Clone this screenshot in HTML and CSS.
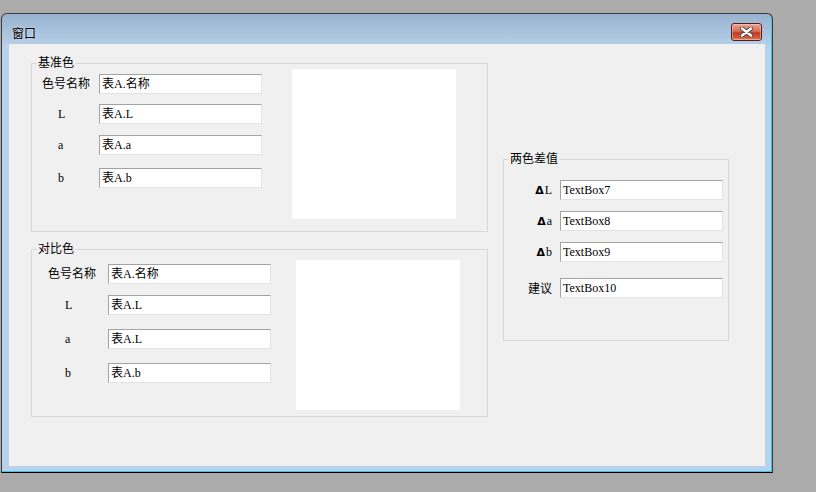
FILE: index.html
```html
<!DOCTYPE html>
<html>
<head>
    <title>窗口</title>
    <meta charset="UTF-8">
    <link rel="stylesheet" href="styles.css">
</head>

<body>
    <div class="window">
        <div class="titlebar">
            <span class="title">窗口</span>
            <div class="close-btn">
                <svg width="13" height="10" viewBox="0 0 13 10">
                    <path d="M2 1.5 L11 8.5 M11 1.5 L2 8.5" stroke="#4a4a4a" stroke-width="4.4" stroke-linecap="round"/>
                    <path d="M2 1.5 L11 8.5 M11 1.5 L2 8.5" stroke="#ffffff" stroke-width="2.4" stroke-linecap="round"/>
                </svg>
            </div>
        </div>

        <div class="client">
            <div class="left-col">
                <div class="group group-base">
                    <span class="group-title">基准色</span>
                    <div class="fields">
                        <span class="label">色号名称</span>
                        <div class="textbox">表A.名称</div>
                        <span class="label short">L</span>
                        <div class="textbox">表A.L</div>
                        <span class="label short">a</span>
                        <div class="textbox">表A.a</div>
                        <span class="label short">b</span>
                        <div class="textbox">表A.b</div>
                    </div>
                    <div class="swatch"></div>
                </div>

                <div class="group group-compare">
                    <span class="group-title">对比色</span>
                    <div class="fields">
                        <span class="label">色号名称</span>
                        <div class="textbox">表A.名称</div>
                        <span class="label short">L</span>
                        <div class="textbox">表A.L</div>
                        <span class="label short">a</span>
                        <div class="textbox">表A.L</div>
                        <span class="label short">b</span>
                        <div class="textbox">表A.b</div>
                    </div>
                    <div class="swatch"></div>
                </div>
            </div>

            <div class="group group-diff">
                <span class="group-title">两色差值</span>
                <div class="fields">
                    <span class="label"><b class="delta">Δ</b>L</span>
                    <div class="textbox">TextBox7</div>
                    <span class="label"><b class="delta">Δ</b>a</span>
                    <div class="textbox">TextBox8</div>
                    <span class="label"><b class="delta">Δ</b>b</span>
                    <div class="textbox">TextBox9</div>
                    <span class="label cjk">建议</span>
                    <div class="textbox">TextBox10</div>
                </div>
            </div>
        </div>
    </div>
</body>
</html>
```

FILE: styles.css
```css
:root {
    --desktop: #ababab;
    --frame: #b9d1ea;
    --face: #f0f0f0;
    --group-border: #d8d8d8;
}

body {
    margin: 0;
    padding: 13px 0 0 1px;
    background: var(--desktop);
    font-family: "Liberation Serif", "Noto Sans CJK SC", serif;
    font-size: 12px;
    color: #000;
    height: 492px;
    box-sizing: border-box;
    overflow: hidden;
}

.window {
    width: 772px;
    height: 460px;
    box-sizing: border-box;
    border: 1px solid #3a3a3a;
    border-bottom-color: #000;
    border-radius: 6px 6px 0 0;
    background: linear-gradient(#98b3cf, var(--frame) 34px);
    box-shadow: inset -1px -1px 0 #3cc6ea;
    padding: 0 7px 6px 7px;
}

.titlebar {
    height: 30px;
    display: flex;
    justify-content: space-between;
    align-items: flex-start;
    padding: 0 3px;
}

.title {
    margin-top: 11px;
    line-height: 16px;
    font-family: "Noto Sans CJK SC", sans-serif;
    text-shadow: 0 0 3px rgba(255,255,255,0.7);
}

.close-btn {
    margin-top: 9px;
    width: 31px;
    height: 18px;
    box-sizing: border-box;
    border: 1px solid #5a1b1b;
    border-radius: 3px;
    background: linear-gradient(#e8a694 0%, #d66e58 45%, #c23a22 55%, #cf5a3c 85%, #e08a66 100%);
    box-shadow: inset 0 0 0 1px rgba(255,220,210,0.45);
    display: flex;
    align-items: center;
    justify-content: center;
}

.close-btn svg {
    display: block;
}

.client {
    height: 422px;
    background: var(--face);
    padding: 19px 0 0 22px;
    box-sizing: border-box;
    display: flex;
    align-items: flex-start;
}

.left-col {
    display: flex;
    flex-direction: column;
    gap: 17px;
}

.group {
    position: relative;
    border: 1px solid var(--group-border);
    box-sizing: border-box;
    display: flex;
    align-items: flex-start;
}

.group-title {
    position: absolute;
    top: -9px;
    left: 5px;
    padding: 0 1px;
    line-height: 14px;
    background: var(--face);
    font-family: "Noto Sans CJK SC", sans-serif;
}

.fields {
    display: grid;
    align-items: start;
}

.label {
    line-height: 20px;
    white-space: nowrap;
}

.textbox {
    width: 163px;
    height: 20px;
    box-sizing: border-box;
    background: #fff;
    border: 1px solid;
    border-color: #a3a3a3 #e3e3e3 #e3e3e3 #a3a3a3;
    padding-left: 2px;
    line-height: 18px;
    white-space: nowrap;
}

.swatch {
    width: 164px;
    height: 150px;
    background: #fff;
}

/* 基准色 */
.group-base {
    width: 457px;
    height: 169px;
    padding-left: 10px;
}

.group-base .fields {
    margin-top: 10px;
    grid-template-columns: 57px 163px;
    grid-template-rows: 30px 31px 33px 20px;
}

.group-base .short {
    padding-left: 16px;
}

.group-base .swatch {
    margin: 5px 0 0 30px;
}

/* 对比色 */
.group-compare {
    width: 457px;
    height: 168px;
    padding-left: 16px;
}

.group-compare .fields {
    margin-top: 14px;
    grid-template-columns: 60px 163px;
    grid-template-rows: 31px 34px 34px 20px;
}

.group-compare .short {
    padding-left: 17px;
}

.group-compare .swatch {
    margin: 10px 0 0 25px;
}

/* 两色差值 */
.group-diff {
    width: 226px;
    height: 182px;
    margin: 96px 0 0 15px;
    padding-left: 23px;
}

.group-diff .fields {
    margin-top: 20px;
    grid-template-columns: 33px 163px;
    grid-template-rows: 31px 31px 36px 20px;
}

.group-diff .label {
    text-align: right;
    padding-right: 8px;
}

.group-diff .cjk {
    font-family: "Noto Sans CJK SC", sans-serif;
}

.delta {
    font-family: "DejaVu Sans", sans-serif;
    font-size: 11px;
    font-weight: bold;
    margin-right: 1px;
}
```
